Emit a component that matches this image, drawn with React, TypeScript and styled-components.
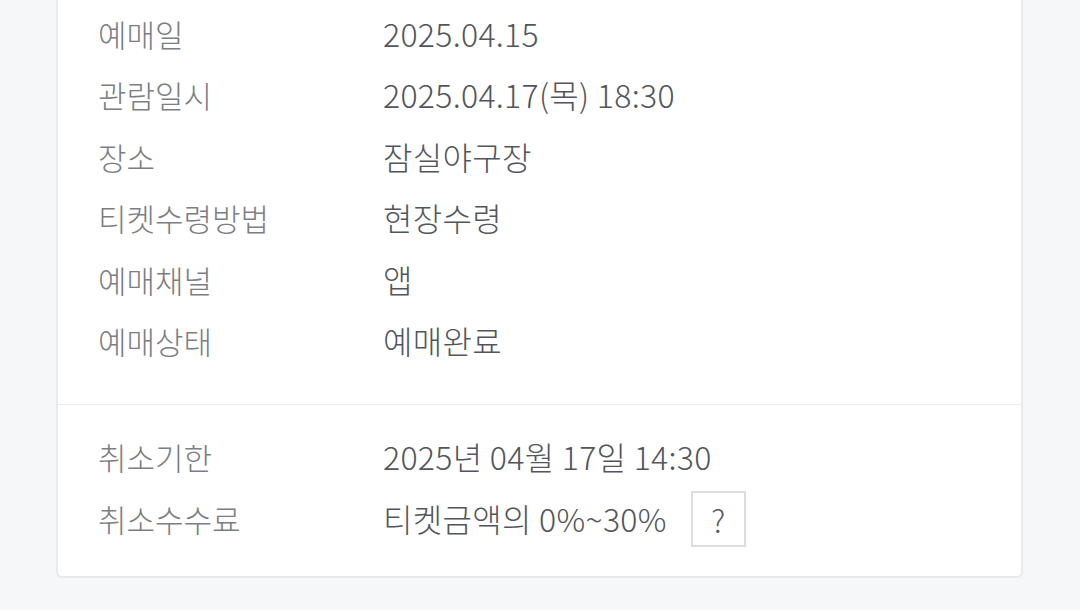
import React from 'react'
import styled, { createGlobalStyle } from 'styled-components'

const GlobalStyle = createGlobalStyle`
    html, body {
        margin: 0;
        padding: 0;
        background: #f6f7f9;
    }
    body {
        font-family: 'Noto Sans CJK KR', 'Noto Sans', sans-serif;
        -webkit-font-smoothing: antialiased;
    }
`

const Page = styled.div`
    width: 1080px;
    height: 610px;
    overflow: hidden;
    box-sizing: border-box;
    padding: 0 57px 0 56px;
`

const Card = styled.div`
    background: #ffffff;
    border: 2px solid #e8e9ec;
    border-top: none;
    border-radius: 0 0 6px 6px;
`

const Section = styled.div<{ last?: boolean }>`
    display: flex;
    flex-direction: column;
    gap: ${({ last }) => (last ? '14px' : '20px')};
    padding: ${({ last }) => (last ? '31px 40px 28.5px' : '12.5px 40px 41.5px')};
    border-bottom: ${({ last }) => (last ? 'none' : '1px solid #ebecef')};
`

const Row = styled.div`
    display: flex;
    align-items: center;
    min-height: 41.6px;
`

const Label = styled.div`
    width: 285px;
    flex-shrink: 0;
    font-size: 31px;
    font-weight: 300;
    line-height: 41.6px;
    color: #7b7e84;
`

const Value = styled.div`
    display: flex;
    align-items: center;
    font-size: 32px;
    font-weight: 300;
    line-height: 41.6px;
    color: #52565c;
    letter-spacing: 0.3px;
`

const HelpButton = styled.button`
    width: 55px;
    height: 56px;
    margin-left: 24px;
    padding: 0;
    background: #ffffff;
    border: 2px solid #dcdde0;
    border-radius: 0;
    font-family: 'Noto Sans CJK KR', 'Noto Sans', sans-serif;
    font-size: 31px;
    font-weight: 300;
    color: #55595f;
    display: flex;
    align-items: center;
    justify-content: center;
    cursor: pointer;
`

const info = [
    ['예매일', '2025.04.15'],
    ['관람일시', '2025.04.17(목) 18:30'],
    ['장소', '잠실야구장'],
    ['티켓수령방법', '현장수령'],
    ['예매채널', '앱'],
    ['예매상태', '예매완료'],
]

export default function App() {
    return (
        <>
            <GlobalStyle />
            <Page>
                <Card>
                    <Section>
                        {info.map(([label, value]) => (
                            <Row key={label}>
                                <Label>{label}</Label>
                                <Value>{value}</Value>
                            </Row>
                        ))}
                    </Section>
                    <Section last>
                        <Row>
                            <Label>취소기한</Label>
                            <Value>2025년 04월 17일 14:30</Value>
                        </Row>
                        <Row>
                            <Label>취소수수료</Label>
                            <Value>
                                티켓금액의 0%~30%
                                <HelpButton type="button">?</HelpButton>
                            </Value>
                        </Row>
                    </Section>
                </Card>
            </Page>
        </>
    )
}
